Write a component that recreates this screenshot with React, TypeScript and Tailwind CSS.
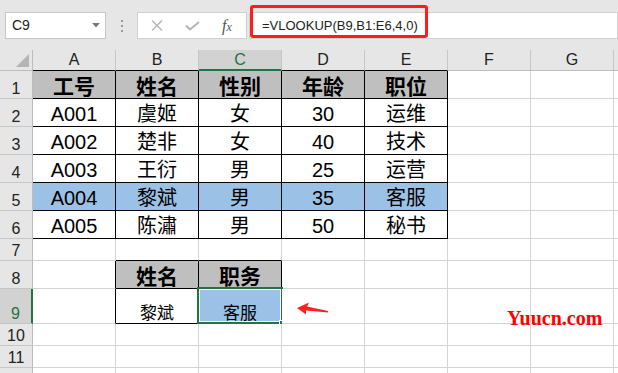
import React from 'react';

type CellSpec = {
  text?: string;
  bg?: string;
  r?: string;
  b?: string;
  bold?: boolean;
  bottom?: boolean;
  selected?: boolean;
};

const cols = ['A', 'B', 'C', 'D', 'E', 'F', 'G'];

const BLK_R = 'border-r-black';
const BLK_B = 'border-b-black';
const HEAD_BG = 'bg-[#bfbfbf]';
const BLUE = 'bg-[#9bc2e6]';

const people = [
  ['A001', '虞姬', '女', '30', '运维'],
  ['A002', '楚非', '女', '40', '技术'],
  ['A003', '王衍', '男', '25', '运营'],
  ['A004', '黎斌', '男', '35', '客服'],
  ['A005', '陈潚', '男', '50', '秘书'],
];

const tableRow = (values: string[], bg?: string, bold?: boolean): CellSpec[] => [
  ...values.map((text) => ({ text, bg, r: BLK_R, b: BLK_B, bold })),
  {},
  {},
];

const blank: CellSpec[] = [{}, {}, {}, {}, {}, {}, {}];

const rows: { n: number; label?: string; h: string; active?: boolean; cells: CellSpec[] }[] = [
  { n: 1, h: 'h-[28px]', cells: tableRow(['工号', '姓名', '性别', '年龄', '职位'], HEAD_BG, true) },
  ...people.map((p, i) => ({
    n: i + 2,
    h: 'h-[28px]',
    cells: tableRow(p, p[0] === 'A004' ? BLUE : undefined),
  })),
  { n: 7, h: 'h-[22px]', cells: [{}, { b: BLK_B }, { b: BLK_B }, {}, {}, {}, {}] },
  {
    n: 8,
    h: 'h-[28px]',
    cells: [
      { r: BLK_R },
      { text: '姓名', bg: HEAD_BG, r: BLK_R, b: BLK_B, bold: true },
      { text: '职务', bg: HEAD_BG, r: BLK_R, b: BLK_B, bold: true },
      {}, {}, {}, {},
    ],
  },
  {
    n: 9,
    h: 'h-[35px]',
    active: true,
    cells: [
      { r: BLK_R },
      { text: '黎斌', r: BLK_R, b: BLK_B, bottom: true },
      { text: '客服', bg: BLUE, r: BLK_R, b: BLK_B, bottom: true, selected: true },
      {}, {}, {}, {},
    ],
  },
  { n: 10, h: 'h-[22px]', cells: blank },
  { n: 11, h: 'h-[22px]', cells: blank },
  // row 12 only peeks in at the bottom edge, its number is out of view
  { n: 12, label: '', h: 'h-[22px]', cells: blank },
];

const Cell: React.FC<{ c: CellSpec }> = ({ c }) => (
  <div
    className={`relative w-[83px] shrink-0 border-r border-b ${c.r ?? 'border-r-[#d4d4d4]'} ${
      c.b ?? 'border-b-[#d4d4d4]'
    } ${c.bg ?? 'bg-white'} flex justify-center ${
      c.bottom ? 'items-end pb-[1px] text-[17px]' : 'items-center pt-[3px]'
    } ${c.bold ? 'font-bold text-[21px]' : c.bottom ? '' : 'text-[20px]'} leading-none text-black`}
  >
    {c.text}
    {c.selected && (
      <div className="absolute left-[-2px] top-[-2px] w-[86px] h-[37px] border-2 border-[#217346] shadow-[inset_0_0_0_1px_white]">
        <div className="absolute right-[-5px] bottom-[-5px] w-[7px] h-[7px] bg-[#217346] border border-white" />
      </div>
    )}
  </div>
);

export default function App() {
  return (
    <div className="relative w-[618px] h-[373px] overflow-hidden bg-white font-['Liberation_Sans','Noto_Sans_CJK_SC',sans-serif]">
      {/* formula bar */}
      <div className="h-[50px] bg-[#e6e6e6] flex items-start pt-[12px]">
        <div className="ml-[5px] w-[101px] h-[27px] bg-white border border-[#c6c6c6] flex items-center justify-between pl-[6px] pr-[5px] text-[14px] text-[#222]">
          <span>C9</span>
          <svg width="8" height="5" viewBox="0 0 8 5">
            <polygon points="0,0 8,0 4,4.5" fill="#7a7a7a" />
          </svg>
        </div>
        <div className="w-[31px] h-[27px] flex flex-col items-center justify-center gap-[3px]">
          <span className="w-[2px] h-[2px] bg-[#9a9a9a]" />
          <span className="w-[2px] h-[2px] bg-[#9a9a9a]" />
          <span className="w-[2px] h-[2px] bg-[#9a9a9a]" />
        </div>
        <div className="w-[110px] h-[27px] bg-white border border-[#d0d0d0] flex items-center">
          <svg className="ml-[13px]" width="12" height="11" viewBox="0 0 12 11">
            <path d="M1 0.5 L11 10.5 M11 0.5 L1 10.5" stroke="#b4b4b4" strokeWidth="1.4" />
          </svg>
          <svg className="ml-[22px]" width="15" height="10" viewBox="0 0 15 10">
            <path d="M1 4.5 L5 8.5 L14 1" stroke="#b4b4b4" strokeWidth="2" fill="none" />
          </svg>
          <span className="ml-[22px] font-['Liberation_Serif',serif] italic text-[16px] text-[#555] leading-none">
            f<span className="text-[12px]">x</span>
          </span>
        </div>
        <div className="ml-[2px] flex-1 h-[27px] bg-white border border-[#d0d0d0] flex items-center pl-[12px] text-[13px] text-[#222]">
          =VLOOKUP(B9,B1:E6,4,0)
        </div>
      </div>
      <div className="absolute left-[250px] top-[5px] w-[178px] h-[33px] border-[3px] border-[#ff1c1c] rounded-[3px]" />

      {/* column headers */}
      <div className="flex h-[21px] bg-[#e6e6e6] text-[16px] text-[#222]">
        <div className="w-[33px] shrink-0 border-r border-b border-[#bdbdbd] flex items-end justify-end pr-[2px] pb-[2px]">
          <svg width="14" height="14" viewBox="0 0 14 14">
            <polygon points="13,0 13,13 0,13" fill="#b4b4b4" />
          </svg>
        </div>
        {cols.map((c, i) => (
          <div
            key={c}
            className={`w-[83px] shrink-0 border-r border-r-[#c6c6c6] flex items-center justify-center leading-none ${
              c === 'C'
                ? 'bg-[#d2d2d2] text-[#217346] border-b-2 border-b-[#217346]'
                : i < 5
                ? 'border-b border-b-black'
                : 'border-b border-b-[#bdbdbd]'
            }`}
          >
            {c}
          </div>
        ))}
        <div className="flex-1 border-b border-[#bdbdbd]" />
      </div>

      {/* sheet rows */}
      {rows.map((row) => (
        <div key={row.n} className={`flex ${row.h}`}>
          <div
            className={`w-[33px] shrink-0 border-b border-b-[#c6c6c6] flex items-end justify-center pb-[1px] text-[16px] leading-none ${
              row.active
                ? 'bg-[#d2d2d2] text-[#217346] border-r-2 border-r-[#217346]'
                : 'bg-[#e6e6e6] text-[#222] border-r border-r-[#bdbdbd]'
            }`}
          >
            {row.label ?? row.n}
          </div>
          {row.cells.map((c, i) => (
            <Cell key={i} c={c} />
          ))}
          <div className="flex-1 border-b border-b-[#d4d4d4]" />
        </div>
      ))}

      {/* annotations */}
      <svg className="absolute left-[294px] top-[300px]" width="36" height="16" viewBox="0 0 36 16">
        <polygon points="3,8 15,2.5 13,6.5 34,11 34,12.5 12,10.5 12,14.5" fill="#ff2020" />
      </svg>
      <div className="absolute left-[507px] top-[308px] font-['Liberation_Serif',serif] font-bold text-[20px] leading-none text-[#ff0000]">
        Yuucn.com
      </div>
    </div>
  );
}
